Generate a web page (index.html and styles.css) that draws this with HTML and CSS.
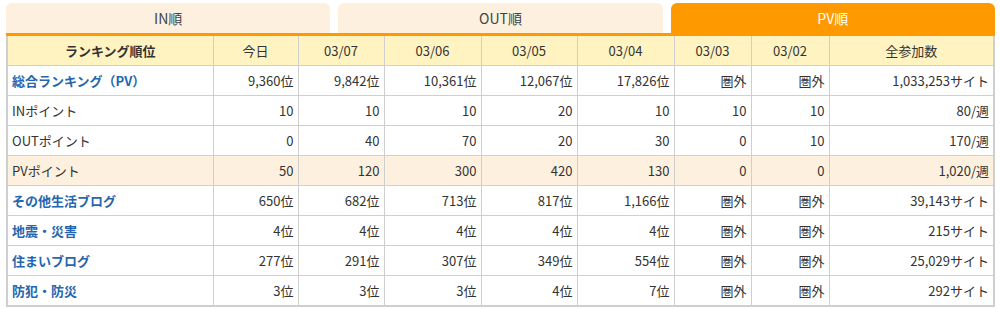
FILE: index.html
```html
<!DOCTYPE html>
<html lang="ja">
<head>
<meta charset="utf-8">
<link rel="stylesheet" href="styles.css">
</head>
<body>
<div class="wrap">
  <div class="tabs">
    <div class="tab">IN順</div>
    <div class="tab">OUT順</div>
    <div class="tab active">PV順</div>
  </div>
  <table class="rank">
    <colgroup>
      <col class="c1"><col class="c2"><col class="c3"><col class="c4"><col class="c5"><col class="c6"><col class="c7"><col class="c8"><col>
    </colgroup>
    <thead>
      <tr>
        <th class="first">ランキング順位</th>
        <th>今日</th><th>03/07</th><th>03/06</th><th>03/05</th><th>03/04</th><th>03/03</th><th>03/02</th><th>全参加数</th>
      </tr>
    </thead>
    <tbody>
      <tr><td class="name link">総合ランキング（PV）</td><td>9,360位</td><td>9,842位</td><td>10,361位</td><td>12,067位</td><td>17,826位</td><td>圏外</td><td>圏外</td><td>1,033,253サイト</td></tr>
      <tr><td class="name">INポイント</td><td>10</td><td>10</td><td>10</td><td>20</td><td>10</td><td>10</td><td>10</td><td>80/週</td></tr>
      <tr><td class="name">OUTポイント</td><td>0</td><td>40</td><td>70</td><td>20</td><td>30</td><td>0</td><td>10</td><td>170/週</td></tr>
      <tr class="hl"><td class="name">PVポイント</td><td>50</td><td>120</td><td>300</td><td>420</td><td>130</td><td>0</td><td>0</td><td>1,020/週</td></tr>
      <tr><td class="name link">その他生活ブログ</td><td>650位</td><td>682位</td><td>713位</td><td>817位</td><td>1,166位</td><td>圏外</td><td>圏外</td><td>39,143サイト</td></tr>
      <tr><td class="name link">地震・災害</td><td>4位</td><td>4位</td><td>4位</td><td>4位</td><td>4位</td><td>圏外</td><td>圏外</td><td>215サイト</td></tr>
      <tr><td class="name link">住まいブログ</td><td>277位</td><td>291位</td><td>307位</td><td>349位</td><td>554位</td><td>圏外</td><td>圏外</td><td>25,029サイト</td></tr>
      <tr><td class="name link">防犯・防災</td><td>3位</td><td>3位</td><td>3位</td><td>4位</td><td>7位</td><td>圏外</td><td>圏外</td><td>292サイト</td></tr>
    </tbody>
  </table>
</div>
</body>
</html>
```
FILE: styles.css
```css
html, body {
  margin: 0;
  padding: 0;
  background: #fff;
}
body {
  font-family: "Noto Sans CJK JP", "Noto Sans", sans-serif;
  color: #333;
  font-size: 13px;
}
.wrap {
  margin: 3px 0 0 6px;
  width: 989px;
}
.tabs {
  display: flex;
  gap: 8px;
}
.tab {
  flex: 1;
  height: 30px;
  line-height: 30px;
  text-align: center;
  font-size: 14px;
  background: #fdf0df;
  color: #444;
  border-radius: 6px 6px 0 0;
}
.tab.active {
  background: #ff9900;
  color: #fff;
}
.rank {
  width: 989px;
  border-collapse: collapse;
  table-layout: fixed;
  border: 2px solid #cfcfcf;
  border-top: 3px solid #ff9900;
}
.c1 { width: 206px; }
.c2 { width: 85px; }
.c3 { width: 86px; }
.c4 { width: 97px; }
.c5 { width: 96px; }
.c6 { width: 97px; }
.c7 { width: 77px; }
.c8 { width: 78px; }
.rank th, .rank td {
  border: 1px solid #cfcfcf;
  height: 29px;
  padding: 0 4px;
  white-space: nowrap;
  line-height: 16px;
}
.rank th {
  background: #fff3c2;
  font-weight: normal;
  text-align: center;
}
.rank th.first {
  font-weight: bold;
}
.rank td {
  text-align: right;
}
.rank td.name {
  text-align: left;
}
.rank td.link {
  color: #2566b0;
  font-weight: bold;
}
.rank tr.hl td {
  background: #fdf0df;
}
```
